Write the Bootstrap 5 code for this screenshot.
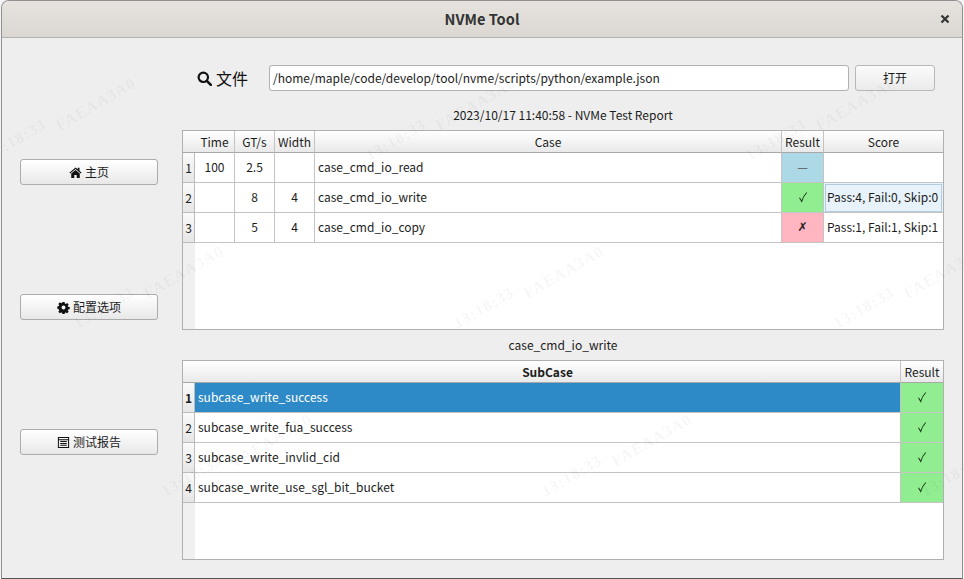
<!DOCTYPE html>
<html lang="zh">
<head>
    <meta charset="UTF-8">
    <meta name="viewport" content="width=device-width, initial-scale=1.0">
    <title>NVMe Tool</title>
    <link href="https://cdn.jsdelivr.net/npm/bootstrap@5.3.0/dist/css/bootstrap.min.css" rel="stylesheet">
    <style>
        html, body { height: 579px; overflow: hidden; background: #f4f4f4; }
        body { font-family: "Noto Sans CJK SC", "Noto Sans", sans-serif; font-size: 12px; color: #1c1c1c; }

        .app-window { position: relative; height: 579px; width: 962px; margin-left: 1px; background: #eeeeee; border: 1px solid #8f8f8f; border-bottom-color: #555; border-radius: 8px 8px 0 0; overflow: hidden; }
        .app-titlebar { height: 37px; flex: none; background: linear-gradient(#e6e3df, #dbd8d4); border-bottom: 1px solid #b4b1ac; position: relative; }
        .app-title { font-size: 14.6px; font-weight: 700; color: #333; }
        .app-close { position: absolute; right: 11px; top: 12px; width: 12px; height: 12px; }

        .side-col { width: 180px; flex: none; padding: 121px 0 0 18px; gap: 109px; }
        .side-btn { width: 138px; height: 26px; padding: 0; font-size: 12px; color: #1c1c1c; background: linear-gradient(#ffffff, #e8e8e8); border: 1px solid #ababab; border-radius: 3px; }
        .side-btn svg { width: 13px; height: 13px; margin-right: 3px; }
        .main-col { width: 762px; flex: none; }

        .file-row { height: 26px; margin-top: 27px; }
        .file-label { width: 87px; flex: none; padding-left: 15px; font-size: 16px; color: #111; }
        .file-label svg { width: 15px; height: 15px; margin-right: 4px; }
        .file-input { width: 580px; height: 26px; min-height: 0; flex: none; padding: 0 3px 2px; font-size: 12px; color: #1c1c1c; border: 1px solid #b0b0b0; border-radius: 3px; font-family: inherit; }
        .file-btn { width: 80px; height: 26px; margin-left: 6px; padding: 0; font-size: 12px; color: #1c1c1c; background: linear-gradient(#fbfbfb, #ebebeb); border: 1px solid #b8b8b8; border-radius: 3px; }

        .report-caption { height: 39px; line-height: 47px; }
        .sub-caption { height: 30px; line-height: 30px; }

        .grid-box { height: 200px; width: 762px; border: 1px solid #b0b0b0; background: linear-gradient(to right, #f0f0f0 12px, #ffffff 12px); overflow: hidden; }
        .grid-table { table-layout: fixed; width: 760px; margin: 0; border-collapse: separate; border-spacing: 0; }
        .grid-table th, .grid-table td { padding: 0 3px; border: 0; border-right: 1px solid #c4c4c4; border-bottom: 1px solid #c4c4c4; box-shadow: none; font-size: 12px; line-height: 18px; color: #1c1c1c; white-space: nowrap; overflow: hidden; vertical-align: middle; }
        .grid-table thead th { height: 22px; font-weight: 400; text-align: center; background: linear-gradient(#ffffff, #e9e9e9); border-bottom-color: #a8a8a8; padding: 0; }
        .grid-table thead th.corner { border-right: 0; }
        .grid-table thead th.on-sect { font-weight: 700; }
        .grid-table tbody th, .grid-table tbody td { height: 30px; }
        .grid-table tbody td { padding-bottom: 2px; }
        .grid-table tbody th.row-no { padding: 0; text-align: center; font-weight: 400; background: linear-gradient(#fafafa, #e6e6e6); border-color: #bcbcbc; }
        .grid-table tbody th.row-no.on-sect { font-weight: 700; }
        .grid-table td:last-child, .grid-table th:last-child { border-right: 0; }
        .cell-mid { text-align: center; }
        .cell-sel { background: #2e8ac6 !important; color: #ffffff !important; }
        .cell-wait { background: #add8e6 !important; color: #555 !important; }
        .cell-pass { background: #90ee90 !important; }
        .cell-fail { background: #ffb6c1 !important; }
        .cell-focus { background: #e8f2fb !important; outline: 1px solid #b4cbdf; outline-offset: -2px; }
        .grid-table td.mark-glyph { font-family: "DejaVu Sans", sans-serif; font-size: 12px; }
        .check-icon { display: block; width: 10px; height: 12px; margin: 0 auto; }

        .wm-layer { position: absolute; inset: 0; pointer-events: none; overflow: hidden; }
        .wm-text { position: absolute; font-family: "Liberation Serif", serif; font-weight: 700; font-size: 16px; letter-spacing: 1px; color: rgba(0, 0, 0, .05); transform: rotate(-30deg); transform-origin: left bottom; white-space: nowrap; }
    </style>
</head>
<body>

    <div class="app-window d-flex flex-column">
        <div class="app-titlebar d-flex align-items-center justify-content-center">
            <span class="app-title">NVMe Tool</span>
            <svg class="app-close" viewBox="0 0 12 12"><path d="M2.500 2.500l7 7M9.500 2.500l-7 7" stroke="#333" stroke-width="2.200" fill="none"/></svg>
        </div>

        <div class="d-flex flex-grow-1">
            <!-- colonne de gauche -->
            <div class="side-col d-flex flex-column">
                <button class="btn side-btn d-flex align-items-center justify-content-center">
                    <svg viewBox="0 0 14 14"><path d="M7 1.600L.4 7.200l.8.900L7 3.200l5.800 4.900.8-.9-2.300-2V2h-1.900v1.500zM2.400 8.200V13h3.300V9.600h2.600V13h3.300V8.200L7 4.400z" fill="#111"/></svg>主页
                </button>
                <button class="btn side-btn d-flex align-items-center justify-content-center">
                    <svg viewBox="0 0 14 14"><path fill-rule="evenodd" d="M5.800 1h2.400l.3 1.700 1 .4 1.400-1 1.700 1.700-1 1.400.4 1 1.700.3v2.400l-1.700.3-.4 1 1 1.400-1.700 1.700-1.400-1-1 .4-.3 1.700H5.800l-.3-1.700-1-.4-1.400 1-1.700-1.700 1-1.400-.4-1L.3 8.200V5.800l1.700-.3.4-1-1-1.400 1.700-1.700 1.400 1 1-.4zM7 4.900a2.100 2.100 0 1 0 0 4.200 2.100 2.100 0 0 0 0-4.200z" fill="#111"/></svg>配置选项
                </button>
                <button class="btn side-btn d-flex align-items-center justify-content-center">
                    <svg viewBox="0 0 14 14"><path d="M1.500 1.500h11v11h-11zM1.500 4h11M3.500 6h7M3.500 8h7M3.500 10h7" stroke="#111" stroke-width="1.100" fill="none"/></svg>测试报告
                </button>
            </div>

            <!-- zone principale -->
            <div class="main-col d-flex flex-column">
                <div class="file-row d-flex align-items-center">
                    <div class="file-label d-flex align-items-center">
                        <svg viewBox="0 0 15 15"><circle cx="6.300" cy="6.300" r="4.700" stroke="#111" stroke-width="2.200" fill="none"/><path d="M9.800 9.800l4 4" stroke="#111" stroke-width="2.600" stroke-linecap="round"/></svg>文件
                    </div>
                    <input type="text" class="form-control file-input" value="/home/maple/code/develop/tool/nvme/scripts/python/example.json">
                    <button class="btn file-btn">打开</button>
                </div>

                <div class="report-caption text-center">2023/10/17 11:40:58 - NVMe Test Report</div>

                <div class="grid-box">
                    <table class="table grid-table">
                        <colgroup><col style="width:12px"><col style="width:40px"><col style="width:40px"><col style="width:40px"><col style="width:467px"><col style="width:42px"><col style="width:119px"></colgroup>
                        <thead>
                            <tr><th class="corner"></th><th>Time</th><th>GT/s</th><th>Width</th><th>Case</th><th>Result</th><th>Score</th></tr>
                        </thead>
                        <tbody id="caseTable"></tbody>
                    </table>
                </div>

                <div class="sub-caption text-center">case_cmd_io_write</div>

                <div class="grid-box">
                    <table class="table grid-table">
                        <colgroup><col style="width:12px"><col style="width:706px"><col style="width:42px"></colgroup>
                        <thead>
                            <tr><th class="corner"></th><th class="on-sect">SubCase</th><th>Result</th></tr>
                        </thead>
                        <tbody id="subcaseTable"></tbody>
                    </table>
                </div>
            </div>
        </div>

        <div class="wm-layer" id="wmLayer"></div>
    </div>

    <script src="https://cdn.jsdelivr.net/npm/bootstrap@5.3.0/dist/js/bootstrap.bundle.min.js"></script>
    <script>
        const checkIcon = `<svg class="check-icon" viewBox="0 0 10 12"><path d="M1.500 6.800L3.700 10.500C4.700 7 6.300 4 8.800 1.500" stroke="#1c3a1c" stroke-width="1.050" fill="none"/></svg>`;
        const cases = [
            { time: "100", gts: "2.5", width: "", name: "case_cmd_io_read", cls: "cell-wait", mark: "—", score: "" },
            { time: "", gts: "8", width: "4", name: "case_cmd_io_write", cls: "cell-pass", mark: checkIcon, score: "Pass:4, Fail:0, Skip:0", focus: true },
            { time: "", gts: "5", width: "4", name: "case_cmd_io_copy", cls: "cell-fail mark-glyph", mark: "✗", score: "Pass:1, Fail:1, Skip:1" }
        ];
        const subcases = ["subcase_write_success", "subcase_write_fua_success", "subcase_write_invlid_cid", "subcase_write_use_sgl_bit_bucket"];

        document.getElementById("caseTable").innerHTML = cases.map((c, i) => `<tr>
            <th class="row-no">${i + 1}</th>
            <td class="cell-mid">${c.time}</td>
            <td class="cell-mid">${c.gts}</td>
            <td class="cell-mid">${c.width}</td>
            <td>${c.name}</td>
            <td class="cell-mid ${c.cls}">${c.mark}</td>
            <td class="${c.focus ? "cell-focus" : ""}">${c.score}</td>
        </tr>`).join("");

        document.getElementById("subcaseTable").innerHTML = subcases.map((name, i) => `<tr>
            <th class="row-no ${i === 0 ? "on-sect" : ""}">${i + 1}</th>
            <td class="${i === 0 ? "cell-sel" : ""}">${name}</td>
            <td class="cell-mid cell-pass">${checkIcon}</td>
        </tr>`).join("");

        // filigrane répété, uniquement ce qui se voit dans la fenêtre
        const layer = document.getElementById("wmLayer");
        for (let r = -1; r < 4; r++) {
            for (let c = -1; c < 4; c++) {
                const x = -9 + r * 88 + c * 380;
                const y = 160 + r * 168;
                [["13:18:33", x, y], ["FAEAA3A0", x + 70, y - 30]].forEach(([txt, left, bottom]) => {
                    if (left < -20 || left > 930 || bottom < 50 || bottom > 570) return;
                    const s = document.createElement("span");
                    s.className = "wm-text";
                    s.textContent = txt;
                    s.style.left = left + "px";
                    s.style.top = (bottom - 18) + "px";
                    layer.appendChild(s);
                });
            }
        }
    </script>

</body>
</html>
